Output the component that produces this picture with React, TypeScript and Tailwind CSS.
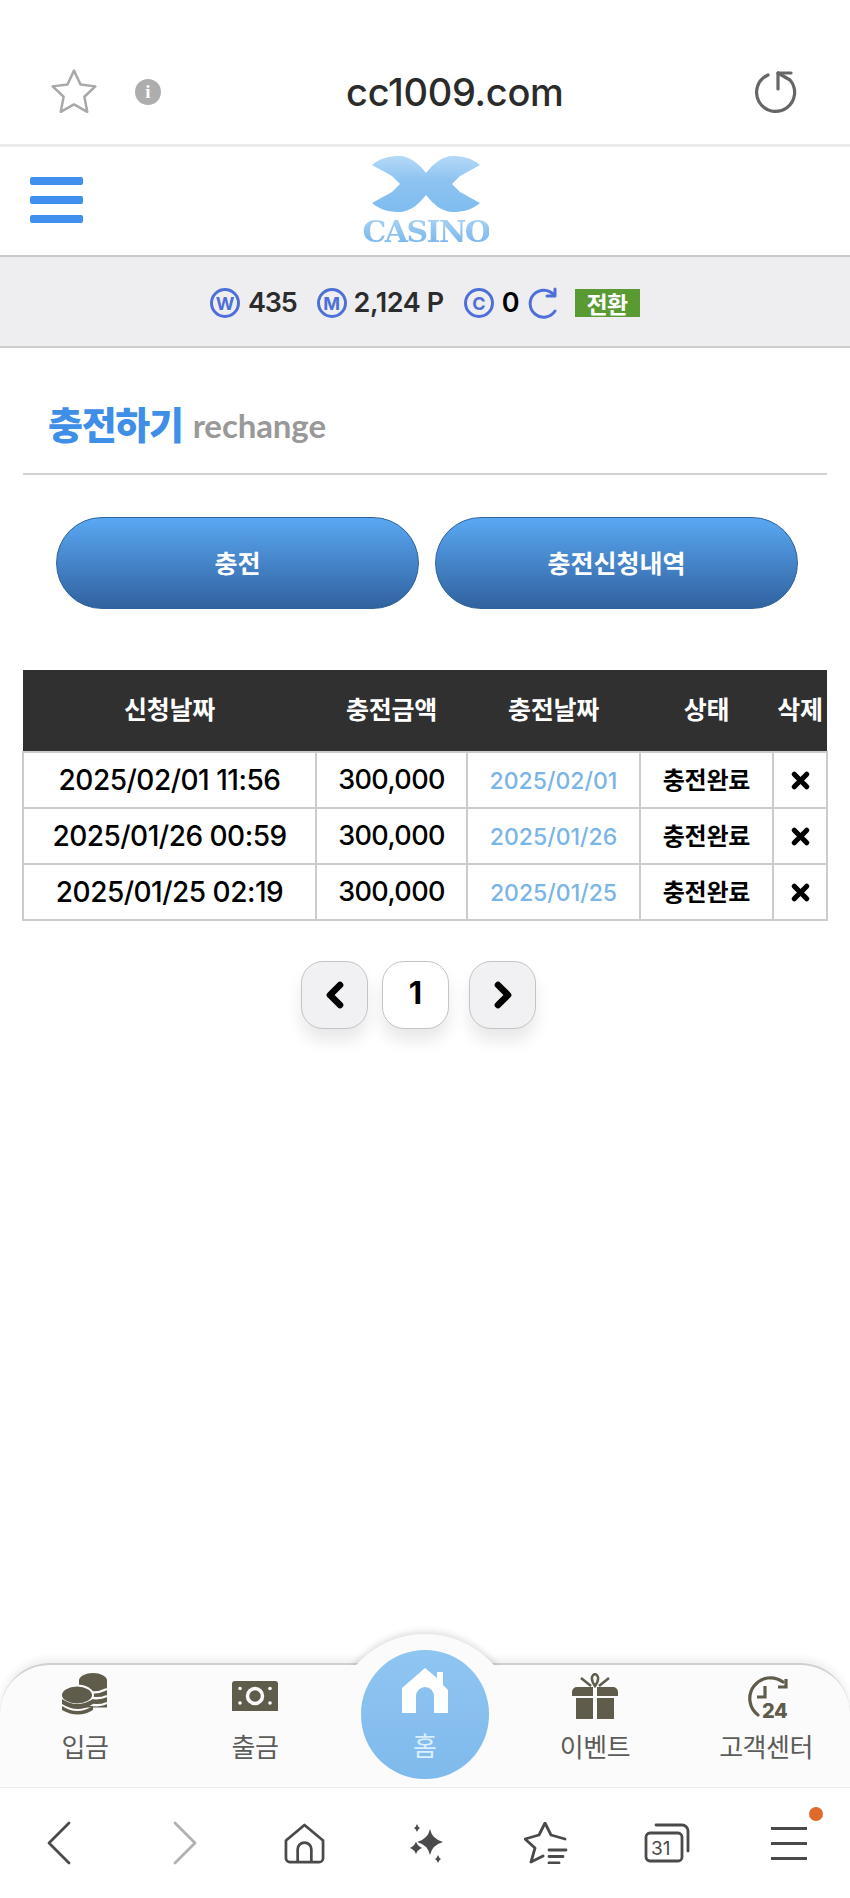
import { ChevronLeft, ChevronRight, X } from "lucide-react";

const sans = "font-['Noto_Sans_CJK_KR','Noto_Sans',sans-serif]";
const num = "font-['Inter','Noto_Sans_CJK_KR',sans-serif]";

const rows = [
  { applied: "2025/02/01 11:56", amount: "300,000", date: "2025/02/01" },
  { applied: "2025/01/26 00:59", amount: "300,000", date: "2025/01/26" },
  { applied: "2025/01/25 02:19", amount: "300,000", date: "2025/01/25" },
];

function Logo() {
  return (
    <div className="flex w-[124px] flex-col items-center">
      <svg width="108" height="56" viewBox="0 0 108 56" aria-hidden="true">
        <defs>
          <linearGradient id="logoFill" x1="0" y1="0" x2="0" y2="1">
            <stop offset="0" stopColor="#b5d9f7" />
            <stop offset="0.45" stopColor="#8cc3f1" />
            <stop offset="1" stopColor="#7fbcef" />
          </linearGradient>
        </defs>
        <path
          d="M0 9C8 2 18 0 27 0C38 0 47 8 54 17C61 8 70 0 81 0C90 0 100 2 108 9L88 20L80 28L88 36L108 47C100 54 90 56 81 56C70 56 61 48 54 39C47 48 38 56 27 56C18 56 8 54 0 47L20 36L28 28L20 20Z"
          fill="url(#logoFill)"
        />
      </svg>
      <span className="mt-[8px] bg-gradient-to-b from-[#a5d0f4] to-[#78b6ec] bg-clip-text font-['DejaVu_Serif',serif] text-[30px] leading-[24px] font-bold tracking-[-1.6px] whitespace-nowrap text-transparent">
        CASINO
      </span>
    </div>
  );
}

function CoinBadge({ letter }: { letter: string }) {
  return (
    <span className="flex h-[30px] w-[30px] items-center justify-center rounded-full border-[3px] border-[#4f6fd8] font-['Inter',sans-serif] text-[18px] font-bold text-[#4f6fd8]">
      {letter}
    </span>
  );
}

function AddressBar() {
  return (
    <div className="flex h-[147px] items-end border-b-[3px] border-[#ececec] bg-white">
      <div className="flex h-[92px] w-full items-center pb-[12px] pl-[47px] pr-[53px]">
        <svg width="54" height="54" viewBox="0 0 24 24" fill="none" stroke="#a8a8a8" strokeWidth="1.1" strokeLinejoin="round">
          <path d="M12 2.5l2.9 6.2 6.6.8-4.9 4.6 1.3 6.7L12 17.5l-5.9 3.3 1.3-6.7-4.9-4.6 6.6-.8z" />
        </svg>
        <span className="ml-[34px] flex h-[26px] w-[26px] items-center justify-center rounded-full bg-[#adadad] font-['Liberation_Serif',serif] text-[19px] font-bold text-white">
          i
        </span>
        <span className={`ml-[185px] flex-1 ${num} text-[38px] leading-none font-medium tracking-[-0.3px] text-[#2b2b2b]`}>cc1009.com</span>
        <svg width="44" height="44" viewBox="0 0 44 44" fill="none" stroke="#666666" strokeWidth="3.2" strokeLinecap="round" strokeLinejoin="round">
          <path d="M15 5A19 19 0 1 0 37 10L25 3" />
          <path d="M25 3v16M25 3h13" />
        </svg>
      </div>
    </div>
  );
}

function SiteHeader() {
  return (
    <header className="flex h-[110px] items-center justify-between border-b-2 border-[#c9c9cc] bg-white pb-[2px] pl-[30px] pr-[362px]">
      <div className="flex w-[53px] flex-col gap-[11px]">
        <span className="h-[8px] rounded-[2px] bg-[#3f8fee]" />
        <span className="h-[8px] rounded-[2px] bg-[#3f8fee]" />
        <span className="h-[8px] rounded-[2px] bg-[#3f8fee]" />
      </div>
      <Logo />
    </header>
  );
}

function BalanceBar() {
  return (
    <div className={`flex h-[91px] items-center border-b-2 border-[#cfcfd2] bg-[#eeeef0] pt-[3px] pl-[210px] ${num} text-[27px] font-semibold text-[#2c2c2c]`}>
      <CoinBadge letter="W" />
      <span className="ml-[8px] tracking-[-1.2px]">435</span>
      <span className="ml-[20px]"><CoinBadge letter="M" /></span>
      <span className="ml-[7px] tracking-[-0.4px]">2,124 P</span>
      <span className="ml-[20px]"><CoinBadge letter="C" /></span>
      <span className="ml-[8px] text-black">0</span>
      <svg className="ml-[8px]" width="31" height="32" viewBox="0 0 31 32" fill="none" stroke="#4f6fd8" strokeWidth="3" strokeLinecap="round" strokeLinejoin="round">
        <path d="M26 8A13.5 13.5 0 1 0 27 24" />
        <path d="M19 9h8V2" />
      </svg>
      <span className={`ml-[16px] flex h-[28px] w-[65px] items-center justify-center bg-[#5a9a33] ${sans} text-[23px] font-bold tracking-[-0.5px] text-white`}>
        전환
      </span>
    </div>
  );
}

function RechargeTable() {
  const head = `h-[82px] bg-[#303031] pb-[4px] ${sans} text-[25px] font-bold tracking-[-0.3px] text-white`;
  const cell = "border-2 border-[#cccccc] text-center";
  return (
    <table className="mt-[61px] ml-[22px] w-[804px] table-fixed border-collapse">
      <colgroup>
        <col className="w-[293px]" />
        <col className="w-[151px]" />
        <col className="w-[173px]" />
        <col className="w-[133px]" />
        <col className="w-[54px]" />
      </colgroup>
      <thead>
        <tr>
          <th className={head}>신청날짜</th>
          <th className={head}>충전금액</th>
          <th className={head}>충전날짜</th>
          <th className={head}>상태</th>
          <th className={`${head} whitespace-nowrap`}>삭제</th>
        </tr>
      </thead>
      <tbody>
        {rows.map((r) => (
          <tr key={r.applied} className="h-[56px]">
            <td className={`${cell} ${num} text-[28px] font-medium tracking-[-0.5px] text-black`}>{r.applied}</td>
            <td className={`${cell} ${num} text-[27px] font-medium tracking-[-0.6px] text-black`}>{r.amount}</td>
            <td className={`${cell} ${num} pt-[2px] text-[23px] font-medium text-[#79b5e6]`}>{r.date}</td>
            <td className={`${cell} ${sans} pb-[2px] text-[24px] font-bold tracking-[-0.2px] text-black`}>충전완료</td>
            <td className={cell}>
              <X className="mx-auto text-black" size={25} strokeWidth={5} />
            </td>
          </tr>
        ))}
      </tbody>
    </table>
  );
}

function Pagination() {
  const btn = "flex h-[68px] w-[67px] items-center justify-center rounded-[22px] border-[1.5px] border-[#c4c4c6] shadow-[0_12px_16px_rgba(0,0,0,0.09)]";
  return (
    <div className="mt-[40px] flex justify-center gap-[14px] pr-[13px]">
      <button className={`${btn} bg-[#f1f1f3]`}>
        <ChevronLeft className="text-black" size={40} strokeWidth={4} />
      </button>
      <button className={`${btn} bg-white ${num} pb-[4px] text-[31px] font-bold text-black`}>1</button>
      <button className={`${btn} ml-[6px] bg-[#f1f1f3]`}>
        <ChevronRight className="text-black" size={40} strokeWidth={4} />
      </button>
    </div>
  );
}

function CoinsIcon() {
  return (
    <svg width="46" height="46" viewBox="0 0 46 46" fill="#605c4b" aria-hidden="true">
      <path d="M17 7.5v27h28V7.5z" />
      <ellipse cx="31" cy="7.5" rx="14" ry="7.5" />
      <path d="M17 16q14 7 28 0M26 24q10 3 19-1M26 31q10 3 19-1" fill="none" stroke="#fbfbfb" strokeWidth="2.4" />
      <ellipse cx="15" cy="22" rx="16" ry="9.5" stroke="#fbfbfb" strokeWidth="2" />
      <path d="M0 26q15 10 31 0v5q-15 10-31 0zM0 33q15 10 31 0v4q-15 9-31 0z" />
    </svg>
  );
}

function CashIcon() {
  return (
    <svg width="46" height="30" viewBox="0 0 46 30" fill="#605c4b" aria-hidden="true">
      <path d="M3 0h40a3 3 0 0 1 3 3v27H0V3a3 3 0 0 1 3-3z" />
      <circle cx="23" cy="15" r="7.5" fill="none" stroke="#fbfbfb" strokeWidth="3.5" />
      <g fill="#fbfbfb">
        <circle cx="8" cy="7.5" r="1.8" />
        <circle cx="38" cy="7.5" r="1.8" />
        <circle cx="8" cy="22" r="1.8" />
        <circle cx="38" cy="22" r="1.8" />
      </g>
    </svg>
  );
}

function GiftIcon() {
  return (
    <svg width="46" height="46" viewBox="0 0 46 46" fill="#605c4b" aria-hidden="true">
      <path d="M5 14h36a5 5 0 0 1 5 5v4H0v-4a5 5 0 0 1 5-5zM4 25h17v21H4zM25 25h17v21H25z" />
      <rect x="21" y="14" width="4" height="9" fill="#fbfbfb" />
      <path d="M23 13C16 3 23 1 23 1s7 2 0 12zM19 13L9 5M27 13l10-8" fill="none" stroke="#605c4b" strokeWidth="2.5" />
    </svg>
  );
}

function SupportIcon() {
  return (
    <svg width="46" height="46" viewBox="0 0 46 46" fill="none" aria-hidden="true">
      <path d="M15 42A20 20 0 0 1 40 9" stroke="#605c4b" strokeWidth="3.2" strokeLinecap="round" />
      <path d="M35 14h8V6M22 13v11h-8" stroke="#605c4b" strokeWidth="3.2" />
      <text x="19" y="45" fontFamily="Inter, sans-serif" fontSize="20" fontWeight="800" fill="#605c4b" letterSpacing="-0.5">
        24
      </text>
    </svg>
  );
}

function TabItem({ label, icon, className }: { label: string; icon: React.ReactNode; className: string }) {
  return (
    <div className={`flex w-[110px] flex-col items-center whitespace-nowrap ${className}`}>
      <div className="flex h-[46px] items-center">{icon}</div>
      <span className={`mt-[11px] ${sans} text-[26px] leading-[32px] tracking-[-0.5px] text-[#5c5c5a]`}>{label}</span>
    </div>
  );
}

function TabBar() {
  return (
    <nav className="relative mt-auto h-[125px] rounded-t-[50px] border-b border-[#ececec] border-t-[2px] border-t-[#d0d0d0] bg-[#fbfbfb] shadow-[0_-5px_7px_rgba(0,0,0,0.06)]">
      <div className="absolute -top-[45px] left-[325px] h-[45px] w-[200px] overflow-hidden">
        <div className="absolute top-[14px] left-[8px] h-[184px] w-[184px] rounded-full bg-[#fbfbfb] shadow-[0_-3px_6px_rgba(0,0,0,0.12)]" />
      </div>
      <div className="absolute -top-[15px] left-[361px] flex h-[129px] w-[128px] flex-col items-center rounded-full bg-gradient-to-b from-[#8fc5f1] to-[#7fbaec] pt-[17px]">
        <svg width="46" height="46" viewBox="0 0 46 46" fill="#ffffff" aria-hidden="true">
          <path d="M23 1L35 11V5h6v13l5 5v23H32V29a9 9 0 0 0-18 0v17H0V21z" />
        </svg>
        <span className={`mt-[17px] ${sans} text-[26px] leading-[30px] text-[#dcedfb]`}>홈</span>
      </div>
      <div className="flex pt-[8px]">
        <TabItem className="ml-[30px]" label="입금" icon={<CoinsIcon />} />
        <TabItem className="ml-[60px]" label="출금" icon={<CashIcon />} />
        <TabItem className="ml-[230px]" label="이벤트" icon={<GiftIcon />} />
        <TabItem className="ml-[61px]" label="고객센터" icon={<SupportIcon />} />
      </div>
    </nav>
  );
}

function BrowserBar() {
  const stroke = { fill: "none", stroke: "#4a4a4c", strokeWidth: 2.8, strokeLinecap: "round", strokeLinejoin: "round" } as const;
  return (
    <div className="flex h-[110px] items-center bg-white pl-[47px]">
      <svg width="24" height="44" viewBox="0 0 24 44" {...stroke}><path d="M22 2L2 22l20 20" /></svg>
      <svg className="ml-[102px]" width="24" height="44" viewBox="0 0 24 44" {...stroke} stroke="#b0b0b2"><path d="M2 2l20 20L2 42" /></svg>
      <svg className="ml-[87px]" width="41" height="41" viewBox="0 0 42 42" {...stroke}>
        <path d="M2 18L21 2l19 16v18a4 4 0 0 1-4 4H6a4 4 0 0 1-4-4zM14 40V27a7 7 0 0 1 14 0v13" />
      </svg>
      <svg className="ml-[82px]" width="36" height="39" viewBox="0 0 36 39" fill="#4a4a4c">
        <path d="M23 5q2 10 13 13-11 3-13 13-2-10-13-13 11-3 13-13z" />
        <path d="M9 15q1 7 8 9-7 2-8 9-1-7-8-9 7-2 8-9z" stroke="#ffffff" strokeWidth="1.5" />
        <path d="M10 0q1 3 3 4-2 1-3 4-1-3-3-4 2-1 3-4zM31 31q1 3 3 4-2 1-3 4-1-3-3-4 2-1 3-4z" />
      </svg>
      <svg className="ml-[81px]" width="44" height="42" viewBox="0 0 44 42" {...stroke}>
        <path d="M41 17L27 13 21 1 15 13 1 17l10 9-4 14 12-6" />
        <path d="M25 28H42M25 34.5H39M25 41H35" />
      </svg>
      <svg className="ml-[76px]" width="46" height="40" viewBox="0 0 46 40" {...stroke}>
        <rect x="2" y="10" width="36" height="28" rx="4" />
        <path d="M12 2h26a6 6 0 0 1 6 6v20" />
        <text x="7" y="32" fontFamily="Inter, sans-serif" fontSize="19" fill="#4a4a4c" stroke="none">31</text>
      </svg>
      <div className="relative ml-[81px] flex w-[36px] flex-col gap-[12px]">
        <span className="h-[3px] bg-[#4a4a4c]" />
        <span className="h-[3px] bg-[#4a4a4c]" />
        <span className="h-[3px] bg-[#4a4a4c]" />
        <span className="absolute -top-[20px] -right-[16px] h-[14px] w-[14px] rounded-full bg-[#e06a2c]" />
      </div>
    </div>
  );
}

export default function App() {
  return (
    <div className="flex h-[1898px] w-[850px] flex-col overflow-hidden bg-white">
      <AddressBar />
      <SiteHeader />
      <BalanceBar />
      <main className="flex flex-1 flex-col">
        <div className="mx-[23px] flex h-[127px] items-end gap-[10px] border-b-2 border-[#d2d2d6] pb-[27px] pl-[25px]">
          <h1 className={`${sans} text-[38px] leading-[46px] font-black tracking-[-1.3px] text-[#3f8ee8]`}>충전하기</h1>
          <span className="font-['Lato',sans-serif] text-[33px] leading-[42px] font-bold tracking-[-0.1px] text-[#999999]">rechange</span>
        </div>
        <div className="mt-[42px] mr-[52px] ml-[56px] flex gap-[16px]">
          <button className={`h-[92px] flex-1 rounded-full border border-[#2f639e] bg-gradient-to-b from-[#5aa8f3] to-[#31629f] ${sans} text-[25px] font-bold text-white`}>
            충전
          </button>
          <button className={`h-[92px] flex-1 rounded-full border border-[#2f639e] bg-gradient-to-b from-[#5aa8f3] to-[#31629f] ${sans} text-[25px] font-bold text-white`}>
            충전신청내역
          </button>
        </div>
        <RechargeTable />
        <Pagination />
      </main>
      <TabBar />
      <BrowserBar />
    </div>
  );
}
